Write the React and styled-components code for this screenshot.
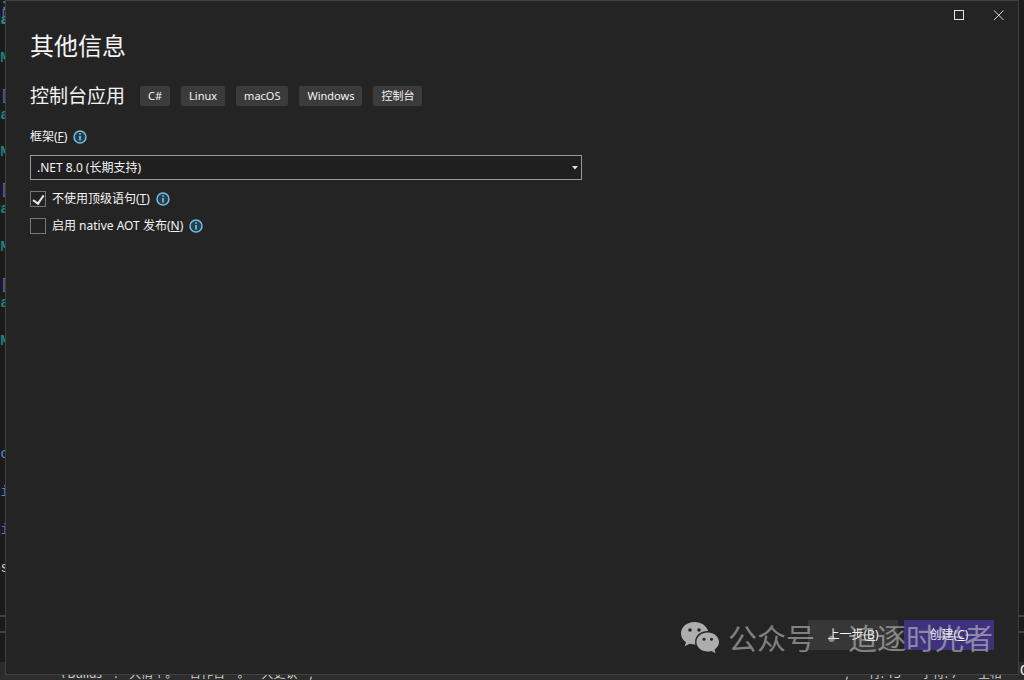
import { useState } from 'react';
import styled, { createGlobalStyle, css } from 'styled-components';

const tags = ['C#', 'Linux', 'macOS', 'Windows', '控制台'];

const colors = {
  type: '#1a8a7c',
  keyword: '#4f8fc9',
  brace: '#6a6ac4',
  text: '#d0cfc8',
};

const codeLines = {
  0: ['Ma', 'type'],
  2: ['"M', 'type'],
  3: ['. ', 'text'],
  4: [':[', 'brace'],
  5: ['Ma', 'type'],
  7: ['"M', 'type'],
  8: ['. ', 'text'],
  9: [':[', 'brace'],
  10: ['Ma', 'type'],
  12: ['"M', 'type'],
  13: ['. ', 'text'],
  14: [':[', 'brace'],
  15: ['Ma', 'type'],
  17: ['"M', 'type'],
  18: ['. ', 'text'],
  23: ['oc', 'keyword'],
  25: ['i', 'keyword'],
  27: ['oi', 'brace'],
  29: ['os', 'text'],
};

const InfoIcon = () => (
  <Info viewBox="0 0 14 14" aria-hidden="true">
    <circle cx="7" cy="7" r="6" fill="#21414f" stroke="#72bde0" strokeWidth="1.5" />
    <path d="M7 6v4.500M7 3.200v1.600" stroke="#8ccbe8" strokeWidth="1.5" fill="none" />
  </Info>
);

const WeChatIcon = () => (
  <WeChat viewBox="0 0 40 34" aria-hidden="true">
    <path
      fill="#adadad"
      d="M14.500 2C6.800 2 1 7 1 13.400c0 3.600 1.900 6.700 5 8.800L4.700 26.300l5-2.500c1.500.4 3.200.7 4.900.7h.9c-.3-.9-.4-1.800-.4-2.800 0-6 5.700-10.600 12.400-10.600h.6C26.700 5.800 21.200 2 14.500 2z"
    />
    <path
      fill="#adadad"
      d="M27.700 12.500c-6.300 0-11.300 4.200-11.300 9.500s5 9.500 11.300 9.500c1.400 0 2.700-.2 3.900-.6l4 2.300-1.100-3.600c2.700-1.800 4.500-4.500 4.500-7.600 0-5.300-5-9.500-11.300-9.500z"
    />
    <g fill="#252525">
      <circle cx="10" cy="10" r="1.800" />
      <circle cx="19" cy="10" r="1.800" />
      <circle cx="24" cy="19.200" r="1.500" />
      <circle cx="31.500" cy="19.200" r="1.500" />
    </g>
  </WeChat>
);

const App = () => {
  const [topLevel, setTopLevel] = useState(true);
  const [aot, setAot] = useState(false);

  return (
    <Desktop>
      <GlobalStyle />
      <Editor aria-hidden="true">
        <FirstLine>:[</FirstLine>
        <Code>
          {Array.from({ length: 30 }, (_, i) => {
            const [text, kind] = codeLines[i] || ['', 'text'];
            return (
              <CodeLine key={i} $kind={kind}>
                {text}
              </CodeLine>
            );
          })}
        </Code>
        <Panes>
          <Pane />
          <Pane />
        </Panes>
      </Editor>

      <Dialog>
        <TitleBar>
          <WindowButton type="button" aria-label="最大化">
            <svg width="11" height="11" viewBox="0 0 11 11">
              <rect x="1.500" y=".5" width="9" height="9" fill="none" stroke="#e4e4e4" />
            </svg>
          </WindowButton>
          <WindowButton type="button" aria-label="关闭">
            <svg width="11" height="11" viewBox="0 0 11 11">
              <path d="M1 .5l9.500 9.500M10.500.5L1 10" fill="none" stroke="#d8d8d8" />
            </svg>
          </WindowButton>
        </TitleBar>

        <Form>
          <Title>其他信息</Title>
          <Template>
            <Subtitle>控制台应用</Subtitle>
            <Tags>
              {tags.map((tag) => (
                <Tag key={tag}>{tag}</Tag>
              ))}
            </Tags>
          </Template>

          <Field>
            <label htmlFor="framework">
              框架(<u>F</u>)
            </label>
            <InfoIcon />
          </Field>
          <SelectBox>
            <select id="framework" defaultValue="net8">
              <option value="net8">.NET 8.0 (长期支持)</option>
            </select>
            <Arrow viewBox="0 0 6 4" aria-hidden="true">
              <path d="M0 0h6L3 3.500z" fill="#e0e0e0" />
            </Arrow>
          </SelectBox>

          <CheckRow>
            <Checkbox
              id="top-level"
              checked={topLevel}
              onChange={(e) => setTopLevel(e.target.checked)}
            />
            <label htmlFor="top-level">
              不使用顶级语句(<u>T</u>)
            </label>
            <InfoIcon />
          </CheckRow>
          <CheckRow>
            <Checkbox
              id="aot"
              checked={aot}
              onChange={(e) => setAot(e.target.checked)}
            />
            <label htmlFor="aot">
              启用 native AOT 发布(<u>N</u>)
            </label>
            <InfoIcon />
          </CheckRow>
        </Form>

        <Footer>
          <Button type="button">
            上一步(<u>B</u>)
          </Button>
          <Button type="button" $primary>
            创建(<u>C</u>)
          </Button>
          <Watermark>
            <WeChatIcon />
            <Account>
              <span>公众号</span>
              <span>·</span>
              <span>追逐时光者</span>
            </Account>
          </Watermark>
        </Footer>
      </Dialog>

      <Editor aria-hidden="true">
        <Code />
        <Panes>
          <Pane />
          <Pane />
          <PaneText>C</PaneText>
        </Panes>
      </Editor>

      <StatusBar aria-hidden="true">
        <StatusGroup>
          <span>\ Builds</span>
          <span>.</span>
          <span>大情个。</span>
          <span>合作台</span>
          <span>。</span>
          <span>大更认</span>
          <span>,</span>
        </StatusGroup>
        <StatusGroup $wide>
          <span>,</span>
          <span>行: 13</span>
          <span>字符: 7</span>
          <span>空格</span>
        </StatusGroup>
      </StatusBar>
    </Desktop>
  );
};

const GlobalStyle = createGlobalStyle`
  * {
    box-sizing: border-box;
  }

  body {
    margin: 0;
    background: #1b1b1b;
    color: #f4f4f4;
    font-family: 'Noto Sans', 'Noto Sans CJK SC', sans-serif;
    font-size: 12px;
    line-height: 16px;
  }

  button,
  select {
    font: inherit;
    color: inherit;
  }
`;

const Desktop = styled.div`
  display: grid;
  grid-template-columns: 5px 1fr 5px;
  grid-template-rows: 1fr 5px;
  height: 100vh;
  overflow: hidden;
`;

const Editor = styled.div`
  display: flex;
  flex-direction: column;
  min-width: 0;
  overflow: hidden;
  background: #1b1b1b;
  font-family: 'Liberation Mono', monospace;
  font-size: 14px;
`;

const FirstLine = styled.div`
  display: flex;
  justify-content: flex-end;
  height: 11px;
  margin-right: -4px;
  line-height: 11px;
  color: ${colors.brace};
`;

/* the last column of code runs on under the dialog */
const Code = styled.div`
  flex: 1;
  display: grid;
  grid-template-columns: minmax(0, 1fr);
  grid-auto-rows: 1fr;
  margin-right: -4px;
`;

const CodeLine = styled.div`
  display: flex;
  align-items: center;
  justify-content: flex-end;
  min-height: 0;
  white-space: pre;
  color: ${({ $kind }) => colors[$kind]};
  font-weight: ${({ $kind }) => ($kind === 'type' ? 700 : 400)};
`;

const Panes = styled.div`
  height: 98px;
  padding-top: 38px;
  background: linear-gradient(#1b1b1b 85px, #2b2b2b 85px);
`;

const Pane = styled.div`
  height: 16px;
  border-top: 2px solid #414141;
`;

const PaneText = styled.div`
  padding: 16px 0 0 1px;
`;

const Dialog = styled.main`
  display: flex;
  flex-direction: column;
  min-width: 0;
  background: #242424;
  border: 1px solid #414141;
`;

const TitleBar = styled.div`
  display: flex;
  justify-content: flex-end;
  height: 28px;
`;

const WindowButton = styled.button`
  display: grid;
  place-items: center;
  width: 40px;
  height: 28px;
  padding: 0;
  background: none;
  border: 0;
`;

const Form = styled.form`
  flex: 1;
  padding: 0 24px;
`;

const Title = styled.h1`
  margin: 0;
  font-size: 24px;
  font-weight: 400;
  line-height: 34px;
`;

const Template = styled.div`
  display: flex;
  align-items: center;
  gap: 15px;
  margin-top: 19px;
`;

const Subtitle = styled.h2`
  margin: 0;
  font-size: 19px;
  font-weight: 400;
  line-height: 28px;
`;

const Tags = styled.div`
  display: flex;
  gap: 11px;
`;

const Tag = styled.span`
  padding: 2px 8px;
  border-radius: 2px;
  background: #3b3b3b;
  font-size: 11px;
`;

const Info = styled.svg`
  width: 14px;
  height: 14px;
`;

const Field = styled.div`
  display: flex;
  align-items: center;
  gap: 6px;
  margin-top: 19px;
`;

const SelectBox = styled.div`
  display: grid;
  align-items: center;
  width: 552px;
  max-width: 100%;
  margin: 10px 0 11px;

  select {
    grid-area: 1 / 1;
    height: 25px;
    padding: 0 6px;
    appearance: none;
    border: 1px solid #999;
    border-radius: 0;
    background: #1f1f1f;
  }
`;

const Arrow = styled.svg`
  grid-area: 1 / 1;
  justify-self: end;
  width: 6px;
  height: 4px;
  margin-right: 4px;
  pointer-events: none;
`;

const CheckRow = styled.div`
  display: flex;
  align-items: center;
  gap: 6px;
  margin-bottom: 11px;
`;

const Checkbox = styled.input.attrs({ type: 'checkbox' })`
  appearance: none;
  display: grid;
  place-items: center;
  width: 16px;
  height: 16px;
  margin: 0;
  border: 1px solid #777;
  background: #222;

  ${({ checked }) =>
    checked &&
    css`
      &::after {
        content: '';
        width: 5px;
        height: 9px;
        margin-bottom: 2px;
        border: solid #e8e8e8;
        border-width: 0 2px 2px 0;
        transform: rotate(35deg);
      }
    `}
`;

const Footer = styled.footer`
  position: relative;
  display: flex;
  justify-content: flex-end;
  gap: 6px;
  padding: 0 24px 24px;
`;

const Button = styled.button`
  width: 90px;
  height: 30px;
  padding: 0;
  border: 0;
  background: ${({ $primary }) => ($primary ? '#3f327d' : '#373737')};
`;

/* account mark, drawn over the footer buttons */
const Watermark = styled.div`
  position: absolute;
  right: 25px;
  top: 0;
  display: flex;
  align-items: center;
  gap: 8px;
  color: rgba(210, 210, 210, 0.55);
  font-family: 'Noto Sans CJK SC', sans-serif;
  font-size: 29px;
  line-height: 34px;
  white-space: nowrap;
  pointer-events: none;
`;

const Account = styled.div`
  display: flex;
  gap: 2px;
`;

const WeChat = styled.svg`
  width: 40px;
  height: 34px;
`;

const StatusBar = styled.div`
  grid-column: 1 / -1;
  display: flex;
  align-items: flex-end;
  justify-content: space-between;
  padding: 0 22px 0 60px;
  overflow: hidden;
  background: #2d2d2d;
  color: #d0d0d0;
  line-height: 12px;
`;

const StatusGroup = styled.div`
  display: flex;
  gap: ${({ $wide }) => ($wide ? '20px' : '12px')};
`;

export default App;
